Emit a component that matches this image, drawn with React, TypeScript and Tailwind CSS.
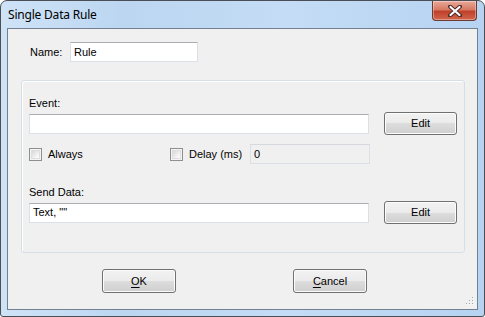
import React from 'react';

const font = "font-['Liberation_Sans',Arial,sans-serif] text-[11px] text-black";

const TextBox = ({ value, width, disabled }: { value: string; width: string; disabled?: boolean }) => (
  <div
    className={`${width} h-[20px] border border-[#dbdfe6] border-t-[#abadb3] ${
      disabled ? 'bg-[#f0f0f0] border-t-[#d5d8dc]' : 'bg-white'
    } flex items-center pl-[3px] leading-none`}
  >
    {value}
  </div>
);

const Button = ({ children, width = 'w-[73px]', height = 'h-[23px]' }: { children: React.ReactNode; width?: string; height?: string }) => (
  <div
    className={`${width} ${height} rounded-[3px] border border-[#707070] bg-[linear-gradient(#f2f2f2_0%,#ebebeb_50%,#dddddd_50%,#cfcfcf_100%)] shadow-[inset_0_0_0_1px_#fcfcfc] flex items-center justify-center leading-none`}
  >
    {children}
  </div>
);

const CheckBox = () => (
  <div className="w-[13px] h-[13px] border border-[#8e8f8f] bg-[#f4f4f4] p-[1px]">
    <div className="w-full h-full bg-[linear-gradient(135deg,#d8d8d8,#f4f4f4_70%,#ffffff)] border border-[#dedede]" />
  </div>
);

const CloseButton = () => (
  <div className="w-[45px] h-[20px] rounded-b-[4px] border border-t-0 border-[#6d3a32] bg-[linear-gradient(#e9a99b_0%,#d77a62_45%,#c0402a_55%,#d1664c_100%)] shadow-[inset_0_0_0_1px_rgba(255,255,255,0.35)] flex items-center justify-center">
    <svg width="14" height="12" viewBox="0 0 14 12">
      <path d="M2 1.5 L12 10.5 M12 1.5 L2 10.5" stroke="#4a2a28" strokeWidth="4" strokeLinecap="round" />
      <path d="M2.5 2 L11.5 10 M11.5 2 L2.5 10" stroke="#ffffff" strokeWidth="2.2" strokeLinecap="round" />
    </svg>
  </div>
);

export default function App() {
  return (
    <div className={`w-[485px] h-[317px] ${font}`}>
      <div className="w-full h-full rounded-t-[7px] rounded-b-[3px] border border-[#4b4f55] bg-[linear-gradient(90deg,#cfe3f7_0%,#bcd6f1_25%,#c4dcf5_60%,#b6d3f2_100%)] px-[6px] pb-[6px] flex flex-col">
        <div className="h-[27px] flex items-start justify-between shrink-0">
          <div className="pt-[6px] pl-[1px] font-['Noto_Sans',sans-serif] text-[12px] leading-[16px] tracking-[-0.2px] text-black">
            Single Data Rule
          </div>
          <div className="mr-[1px]">
            <CloseButton />
          </div>
        </div>
        <div className="relative flex-1 border border-[#72808f] bg-[#f0f0f0] flex flex-col">
          <div className="mt-[13px] pl-[22px] flex items-center h-[20px]">
            <div className="w-[40px]">Name:</div>
            <TextBox value="Rule" width="w-[128px]" />
          </div>

          <div className="mt-[18px] ml-[13px] w-[444px] h-[173px] rounded-[3px] border border-[#d5dfe5] shadow-[inset_1px_1px_0_#ffffff] px-[7px] flex flex-col">
            <div className="mt-[16px] h-[13px] leading-[13px]">Event:</div>
            <div className="mt-[2px] h-[23px] flex items-center gap-[15px]">
              <TextBox value="" width="w-[341px]" />
              <Button>Edit</Button>
            </div>
            <div className="mt-[9px] h-[20px] flex items-center">
              <div className="w-[141px] flex items-center gap-[6px]">
                <CheckBox />
                <span>Always</span>
              </div>
              <div className="w-[80px] flex items-center gap-[6px]">
                <CheckBox />
                <span>Delay (ms)</span>
              </div>
              <TextBox value="0" width="w-[120px]" disabled />
            </div>
            <div className="mt-[22px] h-[13px] leading-[13px]">Send Data:</div>
            <div className="mt-[2px] h-[23px] flex items-center gap-[15px]">
              <TextBox value={'Text, ""'} width="w-[341px]" />
              <Button>Edit</Button>
            </div>
          </div>

          <div className="mt-[16px] pl-[94px] flex gap-[117px]">
            <Button width="w-[74px]" height="h-[24px]">
              <span>
                <span className="underline underline-offset-2">O</span>K
              </span>
            </Button>
            <Button width="w-[74px]" height="h-[24px]">
              <span>
                <span className="underline underline-offset-2">C</span>ancel
              </span>
            </Button>
          </div>

          <svg className="absolute right-[2px] bottom-[3px]" width="10" height="10" viewBox="0 0 10 10">
            {[
              [7, 1],
              [4, 4],
              [7, 4],
              [1, 7],
              [4, 7],
              [7, 7],
            ].map(([x, y]) => (
              <g key={`${x}-${y}`}>
                <rect x={x + 1} y={y + 1} width="1" height="1" fill="#ffffff" />
                <rect x={x} y={y} width="1" height="1" fill="#a0a6ad" />
              </g>
            ))}
          </svg>
        </div>
      </div>
    </div>
  );
}
